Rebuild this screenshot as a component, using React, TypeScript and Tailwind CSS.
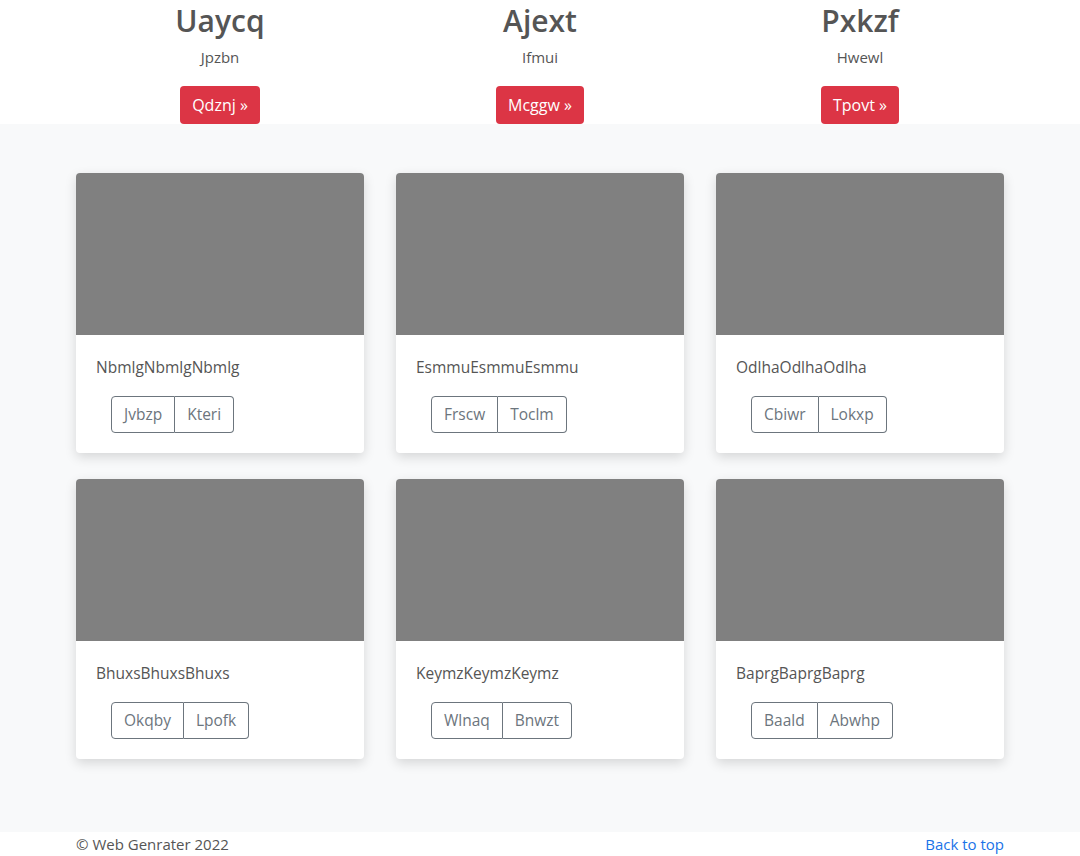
const features = [
  { title: "Uaycq", text: "Jpzbn", btn: "Qdznj" },
  { title: "Ajext", text: "Ifmui", btn: "Mcggw" },
  { title: "Pxkzf", text: "Hwewl", btn: "Tpovt" },
]

const cards = [
  { text: "NbmlgNbmlgNbmlg", a: "Jvbzp", b: "Kteri" },
  { text: "EsmmuEsmmuEsmmu", a: "Frscw", b: "Toclm" },
  { text: "OdlhaOdlhaOdlha", a: "Cbiwr", b: "Lokxp" },
  { text: "BhuxsBhuxsBhuxs", a: "Okqby", b: "Lpofk" },
  { text: "KeymzKeymzKeymz", a: "Wlnaq", b: "Bnwzt" },
  { text: "BaprgBaprgBaprg", a: "Baald", b: "Abwhp" },
]

export default function App() {
  return (
    <div className="min-h-[856px] bg-white text-[#555] font-['Open_Sans',sans-serif]">
      <Features />
      <Album />
      <Footer />
    </div>
  )
}

function Features() {
  return (
    <div className="w-[960px] mx-auto grid grid-cols-3">
      {features.map((f) => (
        <div key={f.title} className="flex flex-col items-center">
          <h2 className="text-[30px] leading-[42px] font-semibold">{f.title}</h2>
          <p className="text-[15px] leading-6 mt-[3px]">{f.text}</p>
          <button className="mt-[17px] h-[38px] px-3 rounded bg-[#dc3545] text-white text-[16px]">
            {f.btn} &raquo;
          </button>
        </div>
      ))}
    </div>
  )
}

function Album() {
  return (
    <div className="bg-[#f8f9fa] pt-[49px] pb-[73px]">
      <div className="w-[960px] mx-auto grid grid-cols-3 gap-y-[26px]">
        {cards.map((c) => (
          <div key={c.text} className="px-4">
            <div className="bg-white rounded overflow-hidden shadow-[0_4px_12px_rgba(0,0,0,0.14)]">
              <div className="h-[162px] bg-[#808080]"></div>
              <div className="p-5">
                <p className="text-[15.5px] leading-6">{c.text}</p>
                <div className="mt-[17px] ml-[15px] flex">
                  <button className="h-[37px] px-3 border border-[#6c757d] rounded-l text-[#6c757d] text-[15.5px]">
                    {c.a}
                  </button>
                  <button className="h-[37px] px-3 border border-l-0 border-[#6c757d] rounded-r text-[#6c757d] text-[15.5px]">
                    {c.b}
                  </button>
                </div>
              </div>
            </div>
          </div>
        ))}
      </div>
    </div>
  )
}

function Footer() {
  return (
    <div className="w-[928px] mx-auto flex justify-between text-[15px] leading-6">
      <span>© Web Genrater 2022</span>
      <a href="#" className="text-[#1a73e8]">Back to top</a>
    </div>
  )
}
